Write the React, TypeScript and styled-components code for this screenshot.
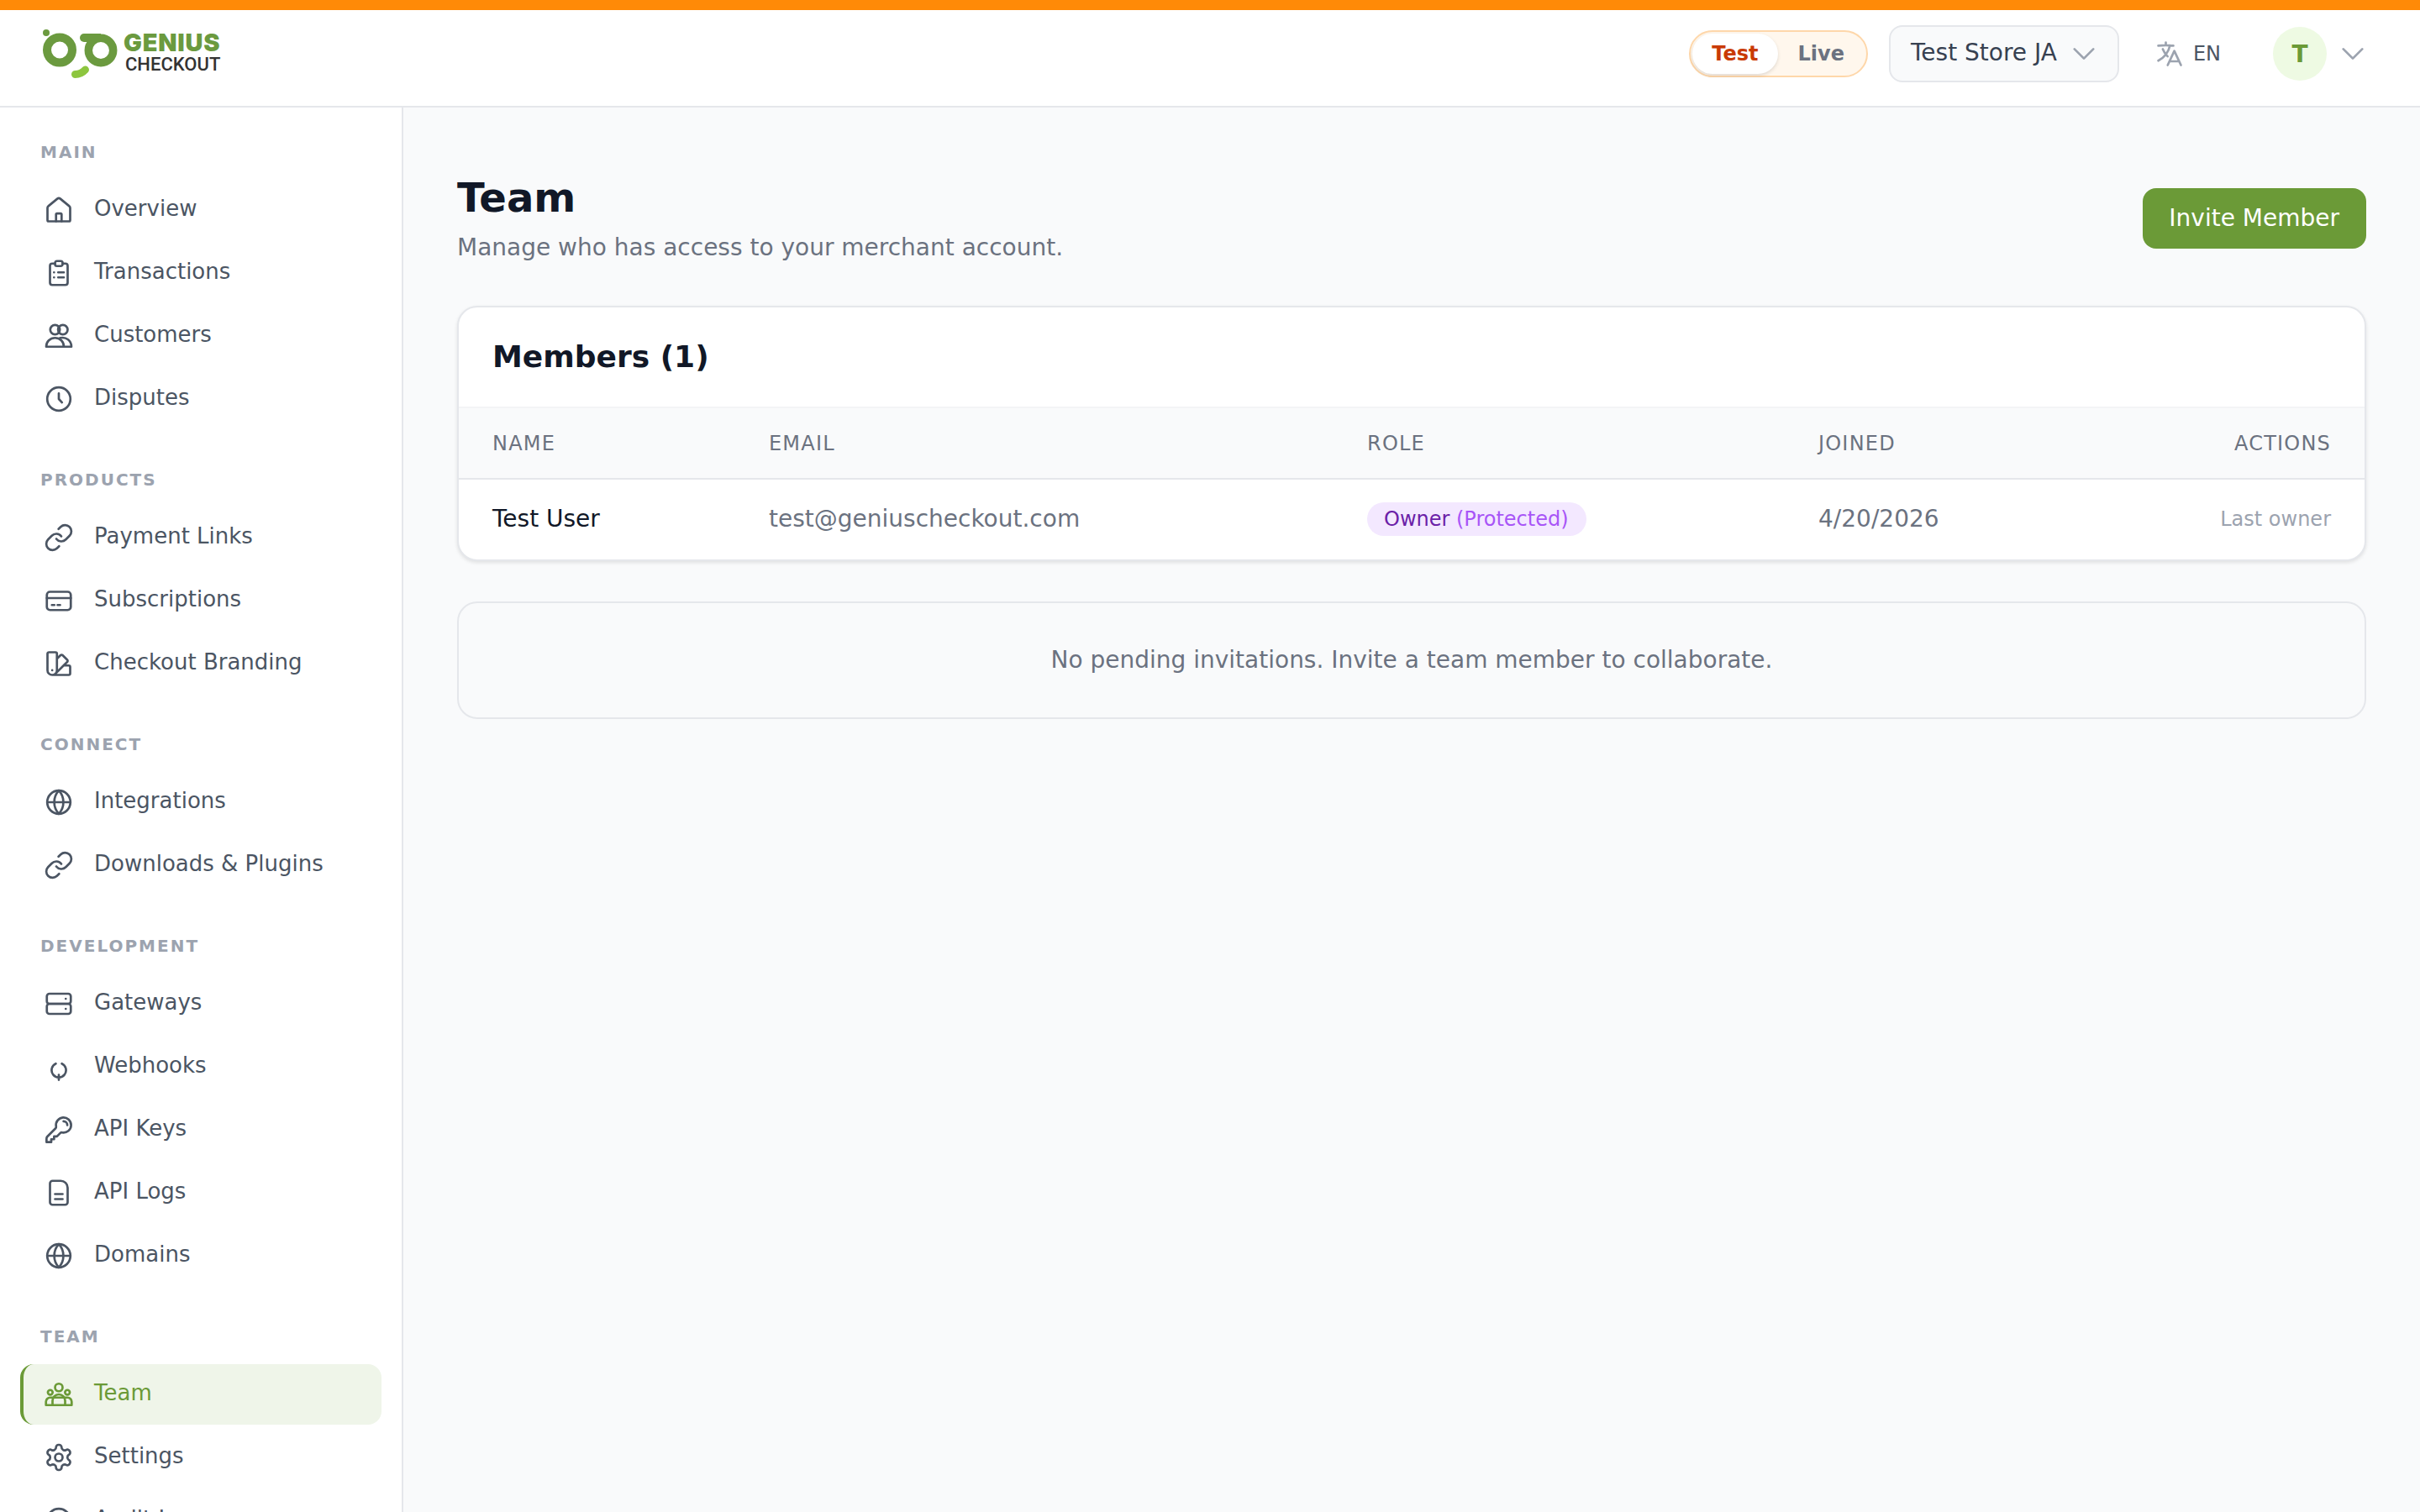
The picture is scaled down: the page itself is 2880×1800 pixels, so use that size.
import React from "react";
import styled, { createGlobalStyle } from "styled-components";

const Global = createGlobalStyle`
  html, body { margin: 0; padding: 0; height: 100%; overflow: hidden; background: #f9fafb; }
  body { font-family: "DejaVu Sans", sans-serif; }
  * { box-sizing: border-box; }
  #root { height: 100%; }
`;

const Page = styled.div`
  height: 100vh;
  display: flex;
  flex-direction: column;
  overflow: hidden;
`;
const ModeBar = styled.div`
  height: 12px;
  flex: none;
  background: #ff8a07;
`;
const TopBar = styled.header`
  height: 116px;
  flex: none;
  display: flex;
  align-items: center;
  justify-content: space-between;
  padding: 0 62px 0 50px;
  background: #fff;
  border-bottom: 2px solid #e5e7eb;
`;
const Logo = styled.div`
  display: flex;
  align-items: flex-start;
  gap: 7px;
  margin-bottom: 10px;
`;
const LogoWords = styled.div`
  display: flex;
  flex-direction: column;
  padding-top: 1px;
`;
const LogoTop = styled.span`
  font-family: Inter, sans-serif;
  font-weight: 900;
  font-size: 29px;
  line-height: 30px;
  letter-spacing: 0.8px;
  color: #6b9a3f;
`;
const LogoBottom = styled.span`
  font-family: Roboto, sans-serif;
  font-weight: 500;
  font-size: 22px;
  line-height: 22px;
  margin-left: 2px;
  color: #333;
`;
const Actions = styled.div`
  display: flex;
  align-items: center;
  margin-bottom: 10px;
`;
const ModeToggle = styled.div`
  display: flex;
  align-items: center;
  height: 56px;
  padding: 2px;
  border: 2px solid #fed7aa;
  border-radius: 28px;
  background: #fff7ed;
  margin-right: 25px;
`;
const ModeOption = styled.span<{ $on?: boolean }>`
  height: 48px;
  display: flex;
  align-items: center;
  padding: 0 ${(p) => (p.$on ? "23px" : "24px")};
  border-radius: 24px;
  font-size: 24px;
  font-weight: 700;
  color: ${(p) => (p.$on ? "#c93a04" : "#6b7280")};
  background: ${(p) => (p.$on ? "#fff" : "transparent")};
  box-shadow: ${(p) => (p.$on ? "0 2px 4px rgba(0,0,0,.12)" : "none")};
`;
const StoreSelect = styled.div`
  height: 68px;
  display: flex;
  align-items: center;
  gap: 14px;
  padding: 0 22px 0 24px;
  border: 2px solid #e5e7eb;
  border-radius: 16px;
  background: #f9fafb;
  font-size: 28px;
  color: #374151;
  margin-right: 42px;
`;
const StoreName = styled.span`
  margin-bottom: 3px;
`;
const Lang = styled.div`
  display: flex;
  align-items: center;
  gap: 10px;
  font-size: 24px;
  color: #4b5563;
  margin-right: 62px;
`;
const Avatar = styled.div`
  width: 64px;
  height: 64px;
  border-radius: 50%;
  display: flex;
  align-items: center;
  justify-content: center;
  background: #eefae3;
  color: #6b9a37;
  font-weight: 700;
  font-size: 28px;
  margin-right: 13px;
`;
const Body = styled.div`
  flex: 1;
  display: flex;
  min-height: 0;
`;
const Sidebar = styled.aside`
  width: 480px;
  flex: none;
  background: #fff;
  border-right: 2px solid #e5e7eb;
  padding: 37px 24px 0;
  overflow: hidden;
`;
const Section = styled.section`
  display: flex;
  flex-direction: column;
  gap: 3px;
  margin-bottom: 44px;
`;
const SectionLabel = styled.h3`
  margin: 0 0 14px;
  padding-left: 24px;
  height: 32px;
  line-height: 32px;
  font-size: 20px;
  font-weight: 700;
  letter-spacing: 2px;
  color: #9ca3af;
`;
const NavItem = styled.a<{ $active?: boolean }>`
  height: 72px;
  flex: none;
  display: flex;
  align-items: center;
  gap: 24px;
  padding-left: ${(p) => (p.$active ? "24px" : "28px")};
  border-left: ${(p) => (p.$active ? "4px solid #6b9a37" : "0")};
  border-radius: 16px;
  font-size: 26px;
  color: ${(p) => (p.$active ? "#6b9a37" : "#4b5563")};
  background: ${(p) => (p.$active ? "#eff5e9" : "transparent")};
`;
const NavText = styled.span`
  margin-bottom: 4px;
`;
const Main = styled.main`
  flex: 1;
  min-width: 0;
  padding: 79px 64px 0;
  background: #f9fafb;
`;
const PageHead = styled.div`
  display: flex;
  align-items: flex-start;
  justify-content: space-between;
  margin-bottom: 49px;
`;
const Title = styled.h1`
  margin: 0;
  font-size: 48px;
  line-height: 56px;
  font-weight: 700;
  color: #111827;
`;
const Subtitle = styled.p`
  margin: 12px 0 0;
  font-size: 28px;
  line-height: 40px;
  color: #6b7280;
`;
const PrimaryButton = styled.button`
  height: 72px;
  margin-top: 17px;
  padding: 0 32px 2px 31px;
  border: 0;
  border-radius: 16px;
  background: #6b9a37;
  color: #fff;
  font-family: inherit;
  font-size: 28px;
`;
const Card = styled.div`
  background: #fff;
  border: 2px solid #e5e7eb;
  border-radius: 24px;
  box-shadow: 0 2px 4px rgba(0, 0, 0, 0.1);
  overflow: hidden;
`;
const CardHead = styled.div`
  height: 120px;
  display: flex;
  align-items: center;
  padding: 0 0 2px 40px;
  border-bottom: 2px solid #f3f4f6;
`;
const CardTitle = styled.h2`
  margin: 0;
  font-size: 36px;
  font-weight: 700;
  color: #111827;
`;
const Row = styled.div`
  display: grid;
  grid-template-columns: 329px 712px 537px 300px 1fr;
  align-items: center;
  padding: 0 40px;
`;
const HeadRow = styled(Row)`
  height: 85px;
  background: #f9fafb;
  border-bottom: 2px solid #e5e7eb;
`;
const BodyRow = styled(Row)`
  height: 95px;
  padding-bottom: 2px;
`;
const Th = styled.div<{ $right?: boolean }>`
  font-size: 24px;
  letter-spacing: 1.2px;
  color: #6b7280;
  text-align: ${(p) => (p.$right ? "right" : "left")};
`;
const Td = styled.div<{ $strong?: boolean }>`
  font-size: 28px;
  color: ${(p) => (p.$strong ? "#111827" : "#6b7280")};
`;
const RoleBadge = styled.span`
  display: inline-block;
  height: 40px;
  line-height: 40px;
  padding: 0 21px 0 20px;
  border-radius: 20px;
  background: #f3e8ff;
  color: #6b21a8;
  font-size: 24px;
`;
const RoleNote = styled.span`
  color: #a855f7;
`;
const ActionNote = styled.div`
  font-size: 24px;
  color: #9ca3af;
  text-align: right;
`;
const EmptyCard = styled.div`
  height: 140px;
  margin-top: 48px;
  padding-bottom: 2px;
  display: flex;
  align-items: center;
  justify-content: center;
  border: 2px solid #e5e7eb;
  border-radius: 24px;
  font-size: 28px;
  color: #6b7280;
`;

const Svg = styled.svg`
  width: 36px;
  height: 36px;
  flex: none;
  fill: none;
  stroke: currentColor;
  stroke-width: 1.8;
  stroke-linecap: round;
  stroke-linejoin: round;
`;
const MutedIcon = styled.span`
  display: flex;
  color: #9ca3af;
`;

const icons: Record<string, React.ReactNode> = {
  home: (
    <>
      <path d="M3 10.3a1.8 1.8 0 0 1 .7-1.4l7.1-5.8a1.9 1.9 0 0 1 2.4 0l7.1 5.8a1.8 1.8 0 0 1 .7 1.4V20a1 1 0 0 1-1 1H4a1 1 0 0 1-1-1z" />
      <path d="M9.8 21v-5.5a.8.8 0 0 1 .8-.8h2.8a.8.8 0 0 1 .8.8V21" />
    </>
  ),
  clipboard: (
    <>
      <path d="M9 4.5H6.8A1.8 1.8 0 0 0 5 6.3v13.4a1.8 1.8 0 0 0 1.8 1.8h10.4a1.8 1.8 0 0 0 1.8-1.8V6.3a1.8 1.8 0 0 0-1.8-1.8H15" />
      <rect x="9" y="2.5" width="6" height="4" rx="1.5" />
      <path d="M11.5 11.5H16M11.5 15.5H16M8.2 11.5h.01M8.2 15.5h.01" />
    </>
  ),
  people: (
    <>
      <circle cx="9" cy="7" r="3.8" />
      <circle cx="15.2" cy="7" r="3.8" />
      <path d="M2 20.5c0-4 3-7 7-7s7 3 7 7z" />
      <path d="M13 13.6c5-1.200 9 2.300 9 6.900h-6" />
    </>
  ),
  clock: (
    <>
      <circle cx="12" cy="12" r="9.2" />
      <path d="M12 7.500V12l2.500 2.700" />
    </>
  ),
  link: (
    <>
      <path d="M10 13a5 5 0 0 0 7.540.540l3-3a5 5 0 0 0-7.070-7.070l-1.720 1.710" />
      <path d="M14 11a5 5 0 0 0-7.540-.540l-3 3a5 5 0 0 0 7.070 7.070l1.710-1.710" />
    </>
  ),
  card: (
    <>
      <rect x="2.500" y="5" width="19" height="14.500" rx="2.500" />
      <path d="M2.500 10h19M6.500 15.500h2M11 15.500h2" />
    </>
  ),
  swatch: (
    <path d="M4.098 19.902a3.75 3.75 0 0 0 5.304 0l6.401-6.402M6.75 21A3.75 3.75 0 0 1 3 17.25V4.125C3 3.504 3.504 3 4.125 3h5.25c.621 0 1.125.504 1.125 1.125v4.072M6.75 21a3.75 3.75 0 0 0 3.75-3.75V8.197M6.75 21h13.125c.621 0 1.125-.504 1.125-1.125v-5.25c0-.621-.504-1.125-1.125-1.125h-4.072M10.5 8.197l2.88-2.88c.438-.439 1.15-.439 1.59 0l3.712 3.713c.44.44.44 1.152 0 1.59l-2.879 2.88M6.750 17.250h.008v.008H6.750v-.008Z" />
  ),
  globe: (
    <>
      <circle cx="12" cy="12" r="9.2" />
      <path d="M12 2.800a13.500 13.500 0 0 0 0 18.400 13.500 13.500 0 0 0 0-18.400M2.800 12h18.400" />
    </>
  ),
  server: (
    <>
      <rect x="2.500" y="4" width="19" height="8" rx="2" />
      <rect x="2.500" y="12" width="19" height="8" rx="2" />
      <path d="M17.500 8h.01M17.500 16h.01" />
    </>
  ),
  hook: <path d="M9.600 9.500a5.700 5.700 0 1 0 4.800 0M12 18.400v4" />,
  key: (
    <path d="M15.750 5.250a3 3 0 0 1 3 3m3 0a6 6 0 0 1-7.029 5.912c-.563-.097-1.159.026-1.563.43L10.500 17.250H8.250v2.250H6v2.250H2.250v-2.818c0-.597.237-1.170.659-1.591l6.499-6.499c.404-.404.527-1 .43-1.563A6 6 0 1 1 21.750 8.250Z" />
  ),
  file: (
    <>
      <path d="M13.500 2.500H7A2 2 0 0 0 5 4.500v15a2 2 0 0 0 2 2h10a2 2 0 0 0 2-2V8a5.500 5.500 0 0 0-5.500-5.500z" />
      <path d="M9 13h6M9 17h6" />
    </>
  ),
  team: (
    <>
      <circle cx="12" cy="6.500" r="3" />
      <circle cx="5.200" cy="10.400" r="1.900" />
      <circle cx="18.800" cy="10.400" r="1.900" />
      <path d="M1.800 20.500v-2.700a3.300 3.300 0 0 1 3.300-3.300h13.800a3.300 3.300 0 0 1 3.300 3.300v2.700z" />
      <path d="M7 20.500V17a5 5 0 0 1 10 0v3.500" />
    </>
  ),
  gear: (
    <>
      <path d="M12.220 2h-.44a2 2 0 0 0-2 2v.18a2 2 0 0 1-1 1.730l-.43.25a2 2 0 0 1-2 0l-.15-.08a2 2 0 0 0-2.730.73l-.22.38a2 2 0 0 0 .73 2.730l.15.1a2 2 0 0 1 1 1.720v.51a2 2 0 0 1-1 1.740l-.15.09a2 2 0 0 0-.73 2.730l.22.38a2 2 0 0 0 2.730.73l.15-.08a2 2 0 0 1 2 0l.43.25a2 2 0 0 1 1 1.730V20a2 2 0 0 0 2 2h.44a2 2 0 0 0 2-2v-.18a2 2 0 0 1 1-1.730l.43-.25a2 2 0 0 1 2 0l.15.08a2 2 0 0 0 2.730-.73l.22-.39a2 2 0 0 0-.73-2.730l-.15-.08a2 2 0 0 1-1-1.740v-.5a2 2 0 0 1 1-1.740l.15-.09a2 2 0 0 0 .73-2.730l-.22-.38a2 2 0 0 0-2.730-.73l-.15.08a2 2 0 0 1-2 0l-.43-.25a2 2 0 0 1-1-1.730V4a2 2 0 0 0-2-2z" />
      <circle cx="12" cy="12" r="3" />
    </>
  ),
};

const Icon = ({ name }: { name: string }) => <Svg viewBox="0 0 24 24">{icons[name]}</Svg>;

const Chevron = () => (
  <MutedIcon>
    <Svg viewBox="0 0 24 24">
      <path d="m19.500 8.250-7.500 7.500-7.500-7.500" />
    </Svg>
  </MutedIcon>
);

const LogoMark = () => (
  <svg width="90" height="58" viewBox="50 35 90 58" aria-hidden="true">
    <circle cx="55" cy="39" r="4" fill="#6b9a3f" />
    <circle cx="71" cy="59.500" r="15" fill="none" stroke="#6b9a3f" strokeWidth="10" />
    <circle cx="120" cy="60" r="14.700" fill="none" stroke="#6b9a3f" strokeWidth="9.500" />
    <path d="M100 40h20v10h-20a5 5 0 0 1 0-10z" fill="#6b9a3f" />
    <path d="M89.500 88.500Q96.500 88.500 101.500 83" fill="none" stroke="#8dc63f" strokeWidth="9" strokeLinecap="round" />
  </svg>
);

type Item = { label: string; icon: string; active?: boolean };
const nav: { title: string; items: Item[] }[] = [
  {
    title: "MAIN",
    items: [
      { label: "Overview", icon: "home" },
      { label: "Transactions", icon: "clipboard" },
      { label: "Customers", icon: "people" },
      { label: "Disputes", icon: "clock" },
    ],
  },
  {
    title: "PRODUCTS",
    items: [
      { label: "Payment Links", icon: "link" },
      { label: "Subscriptions", icon: "card" },
      { label: "Checkout Branding", icon: "swatch" },
    ],
  },
  {
    title: "CONNECT",
    items: [
      { label: "Integrations", icon: "globe" },
      { label: "Downloads & Plugins", icon: "link" },
    ],
  },
  {
    title: "DEVELOPMENT",
    items: [
      { label: "Gateways", icon: "server" },
      { label: "Webhooks", icon: "hook" },
      { label: "API Keys", icon: "key" },
      { label: "API Logs", icon: "file" },
      { label: "Domains", icon: "globe" },
    ],
  },
  {
    title: "TEAM",
    items: [
      { label: "Team", icon: "team", active: true },
      { label: "Settings", icon: "gear" },
      { label: "Audit Log", icon: "clock" },
    ],
  },
];

export default function App() {
  return (
    <Page>
      <Global />
      <ModeBar />
      <TopBar>
        <Logo>
          <LogoMark />
          <LogoWords>
            <LogoTop>GENIUS</LogoTop>
            <LogoBottom>CHECKOUT</LogoBottom>
          </LogoWords>
        </Logo>
        <Actions>
          <ModeToggle>
            <ModeOption $on>Test</ModeOption>
            <ModeOption>Live</ModeOption>
          </ModeToggle>
          <StoreSelect>
            <StoreName>Test Store JA</StoreName>
            <Chevron />
          </StoreSelect>
          <Lang>
            <MutedIcon>
              <Svg viewBox="0 0 24 24">
                <path d="m10.500 21 5.250-11.250L21 21m-9-3h7.500M3 5.621a48.474 48.474 0 0 1 6-.371m0 0c1.120 0 2.233.038 3.334.114M9 5.250V3m3.334 2.364C11.176 10.658 7.690 15.080 3 17.502m9.334-12.138c.896.061 1.785.147 2.666.257m-4.589 8.495a18.023 18.023 0 0 1-3.827-5.802" />
              </Svg>
            </MutedIcon>
            EN
          </Lang>
          <Avatar>T</Avatar>
          <Chevron />
        </Actions>
      </TopBar>
      <Body>
        <Sidebar>
          {nav.map((s) => (
            <Section key={s.title}>
              <SectionLabel>{s.title}</SectionLabel>
              {s.items.map((i) => (
                <NavItem key={i.label} $active={i.active}>
                  <Icon name={i.icon} />
                  <NavText>{i.label}</NavText>
                </NavItem>
              ))}
            </Section>
          ))}
        </Sidebar>
        <Main>
          <PageHead>
            <div>
              <Title>Team</Title>
              <Subtitle>Manage who has access to your merchant account.</Subtitle>
            </div>
            <PrimaryButton>Invite Member</PrimaryButton>
          </PageHead>
          <Card>
            <CardHead>
              <CardTitle>Members (1)</CardTitle>
            </CardHead>
            <HeadRow>
              <Th>NAME</Th>
              <Th>EMAIL</Th>
              <Th>ROLE</Th>
              <Th>JOINED</Th>
              <Th $right>ACTIONS</Th>
            </HeadRow>
            <BodyRow>
              <Td $strong>Test User</Td>
              <Td>test@geniuscheckout.com</Td>
              <Td>
                <RoleBadge>
                  Owner <RoleNote>(Protected)</RoleNote>
                </RoleBadge>
              </Td>
              <Td>4/20/2026</Td>
              <ActionNote>Last owner</ActionNote>
            </BodyRow>
          </Card>
          <EmptyCard>No pending invitations. Invite a team member to collaborate.</EmptyCard>
        </Main>
      </Body>
    </Page>
  );
}
